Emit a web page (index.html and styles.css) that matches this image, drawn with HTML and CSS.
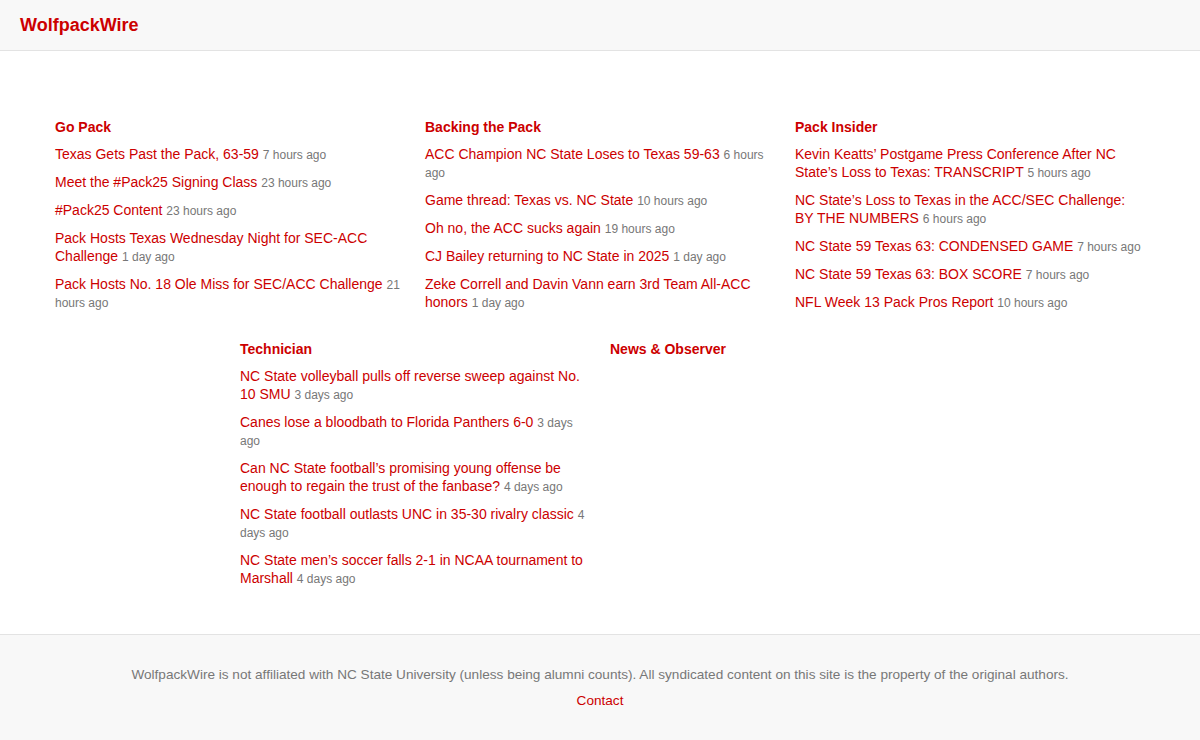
FILE: index.html
```html
<!DOCTYPE html>
<html lang="en">
<head>
  <meta charset="UTF-8" />
  <meta name="viewport" content="width=device-width, initial-scale=1.0"/>
  <title>WolfpackWire</title>
  <link rel="stylesheet" href="styles.css">
</head>
<body>
  <header class="topbar">
    <a href="#" class="brand">WolfpackWire</a>
  </header>

  <main class="feeds">
    <section class="feed">
      <h2>Go Pack</h2>
      <ul>
        <li><a href="#">Texas Gets Past the Pack, 63-59</a> <span class="ago">7 hours ago</span></li>
        <li><a href="#">Meet the #Pack25 Signing Class</a> <span class="ago">23 hours ago</span></li>
        <li><a href="#">#Pack25 Content</a> <span class="ago">23 hours ago</span></li>
        <li><a href="#">Pack Hosts Texas Wednesday Night for SEC-ACC Challenge</a> <span class="ago">1 day ago</span></li>
        <li><a href="#">Pack Hosts No. 18 Ole Miss for SEC/ACC Challenge</a> <span class="ago">21 hours ago</span></li>
      </ul>
    </section>
    <section class="feed">
      <h2>Backing the Pack</h2>
      <ul>
        <li><a href="#">ACC Champion NC State Loses to Texas 59-63</a> <span class="ago">6 hours ago</span></li>
        <li><a href="#">Game thread: Texas vs. NC State</a> <span class="ago">10 hours ago</span></li>
        <li><a href="#">Oh no, the ACC sucks again</a> <span class="ago">19 hours ago</span></li>
        <li><a href="#">CJ Bailey returning to NC State in 2025</a> <span class="ago">1 day ago</span></li>
        <li><a href="#">Zeke Correll and Davin Vann earn 3rd Team All-ACC honors</a> <span class="ago">1 day ago</span></li>
      </ul>
    </section>
    <section class="feed">
      <h2>Pack Insider</h2>
      <ul>
        <li><a href="#">Kevin Keatts’ Postgame Press Conference After NC State’s Loss to Texas: TRANSCRIPT</a> <span class="ago">5 hours ago</span></li>
        <li><a href="#">NC State’s Loss to Texas in the ACC/SEC Challenge: BY THE NUMBERS</a> <span class="ago">6 hours ago</span></li>
        <li><a href="#">NC State 59 Texas 63: CONDENSED GAME</a> <span class="ago">7 hours ago</span></li>
        <li><a href="#">NC State 59 Texas 63: BOX SCORE</a> <span class="ago">7 hours ago</span></li>
        <li><a href="#">NFL Week 13 Pack Pros Report</a> <span class="ago">10 hours ago</span></li>
      </ul>
    </section>
    <section class="feed">
      <h2>Technician</h2>
      <ul>
        <li><a href="#">NC State volleyball pulls off reverse sweep against No. 10 SMU</a> <span class="ago">3 days ago</span></li>
        <li><a href="#">Canes lose a bloodbath to Florida Panthers 6-0</a> <span class="ago">3 days ago</span></li>
        <li><a href="#">Can NC State football’s promising young offense be enough to regain the trust of the fanbase?</a> <span class="ago">4 days ago</span></li>
        <li><a href="#">NC State football outlasts UNC in 35-30 rivalry classic</a> <span class="ago">4 days ago</span></li>
        <li><a href="#">NC State men’s soccer falls 2-1 in NCAA tournament to Marshall</a> <span class="ago">4 days ago</span></li>
      </ul>
    </section>
    <section class="feed">
      <h2>News &amp; Observer</h2>
      <ul></ul>
    </section>
  </main>

  <footer class="footer">
    <p>WolfpackWire is not affiliated with NC State University (unless being alumni counts). All syndicated content on this site is the property of the original authors.</p>
    <p><a href="#">Contact</a></p>
  </footer>
</body>
</html>
```

FILE: styles.css
```css
body {
  font-family: "Liberation Sans", Arial, sans-serif;
  font-size: 14px;
  line-height: 18px;
  background-color: white;
  margin: 0;
  color: #333;
}

a {
  color: #cc0000;
  text-decoration: none;
}

.topbar {
  height: 51px;
  box-sizing: border-box;
  padding: 0 20px;
  display: flex;
  align-items: center;
  background-color: #f8f8f8;
  border-bottom: 1px solid #e3e3e3;
}

.brand {
  font-size: 18px;
  font-weight: bold;
  color: #cc0000;
}

.feeds {
  width: 1110px;
  margin: 0 auto;
  padding: 67px 0 18px;
  display: flex;
  flex-wrap: wrap;
  justify-content: center;
}

.feed {
  width: 370px;
  box-sizing: border-box;
  padding: 0 10px;
  margin-bottom: 19px;
}

.feed h2 {
  font-size: 14px;
  line-height: 18px;
  font-weight: bold;
  color: #cc0000;
  margin: 0 0 9px;
}

.feed ul {
  list-style: none;
  margin: 0;
  padding: 0;
}

.feed li {
  margin-bottom: 10px;
}

.ago {
  font-size: 12px;
  line-height: 12px;
  color: #777;
}

.footer {
  background-color: #f8f8f8;
  border-top: 1px solid #e3e3e3;
  padding: 31px 20px 40px;
  text-align: center;
  font-size: 13.6px;
  color: #777;
}

.footer p {
  margin: 0 0 8px;
}
```
